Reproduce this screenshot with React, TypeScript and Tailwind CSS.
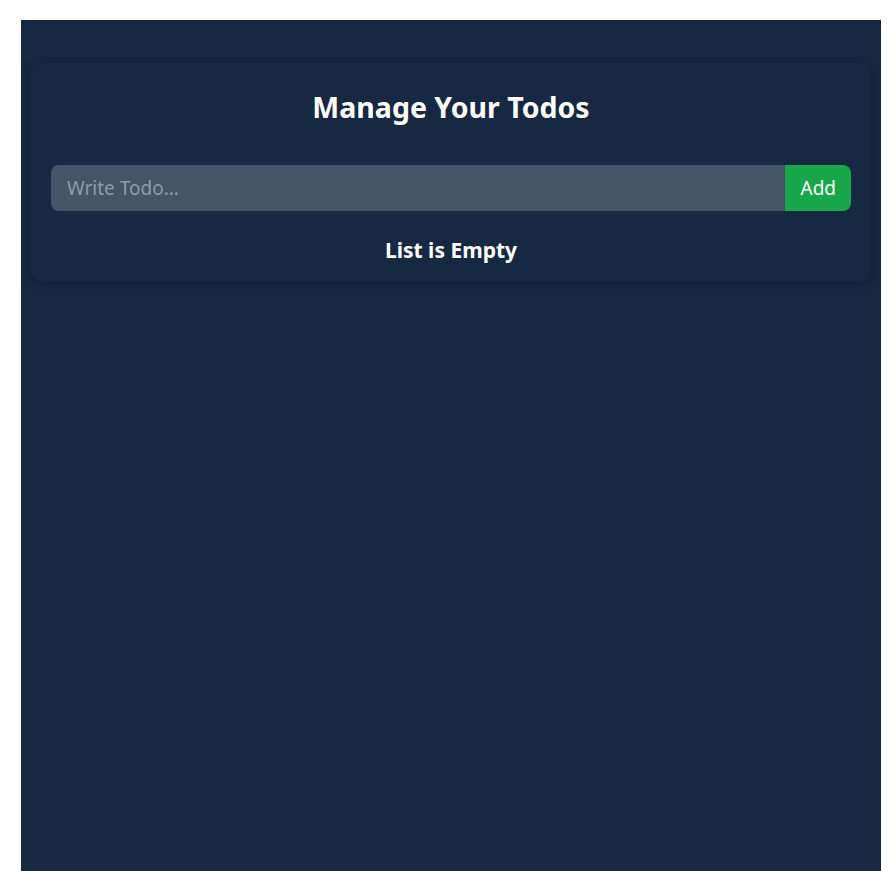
import React, { useState } from 'react'

function App() {
  const [todo, setTodo] = useState('')
  const [todos, setTodos] = useState<string[]>([])

  const addTodo = () => {
    if (!todo.trim()) return
    setTodos([...todos, todo])
    setTodo('')
  }

  return (
    <div className="min-h-screen bg-white pt-5 pl-[21px] pr-[10px] font-['Noto_Sans',sans-serif]">
      <div className="min-h-[851px] bg-[#172842] px-[10px] pt-[43px]">
        <div className="rounded-xl bg-[#172842] px-5 pt-[26px] pb-[18px] shadow-[0_2px_10px_rgba(0,0,0,0.25)]">
          <h1 className="text-center text-[28.5px] leading-9 font-bold text-white">Manage Your Todos</h1>
          <div className="mt-10 flex">
            <input
              type="text"
              value={todo}
              onChange={(e) => setTodo(e.target.value)}
              placeholder="Write Todo..."
              className="h-[46px] w-full rounded-l-lg bg-[#465467] px-4 text-[19px] text-white outline-none placeholder:text-[#8d9bb0]"
            />
            <button
              onClick={addTodo}
              className="shrink-0 rounded-r-lg bg-[#19a74c] px-[15px] text-[19px] text-white"
            >
              Add
            </button>
          </div>
          <div className="mt-[25px]">
            {todos.length === 0 ? (
              <p className="text-center text-[21px] leading-7 font-bold text-white">List is Empty</p>
            ) : (
              todos.map((t, i) => (
                <p key={i} className="text-white">
                  {t}
                </p>
              ))
            )}
          </div>
        </div>
      </div>
    </div>
  )
}

export default App
